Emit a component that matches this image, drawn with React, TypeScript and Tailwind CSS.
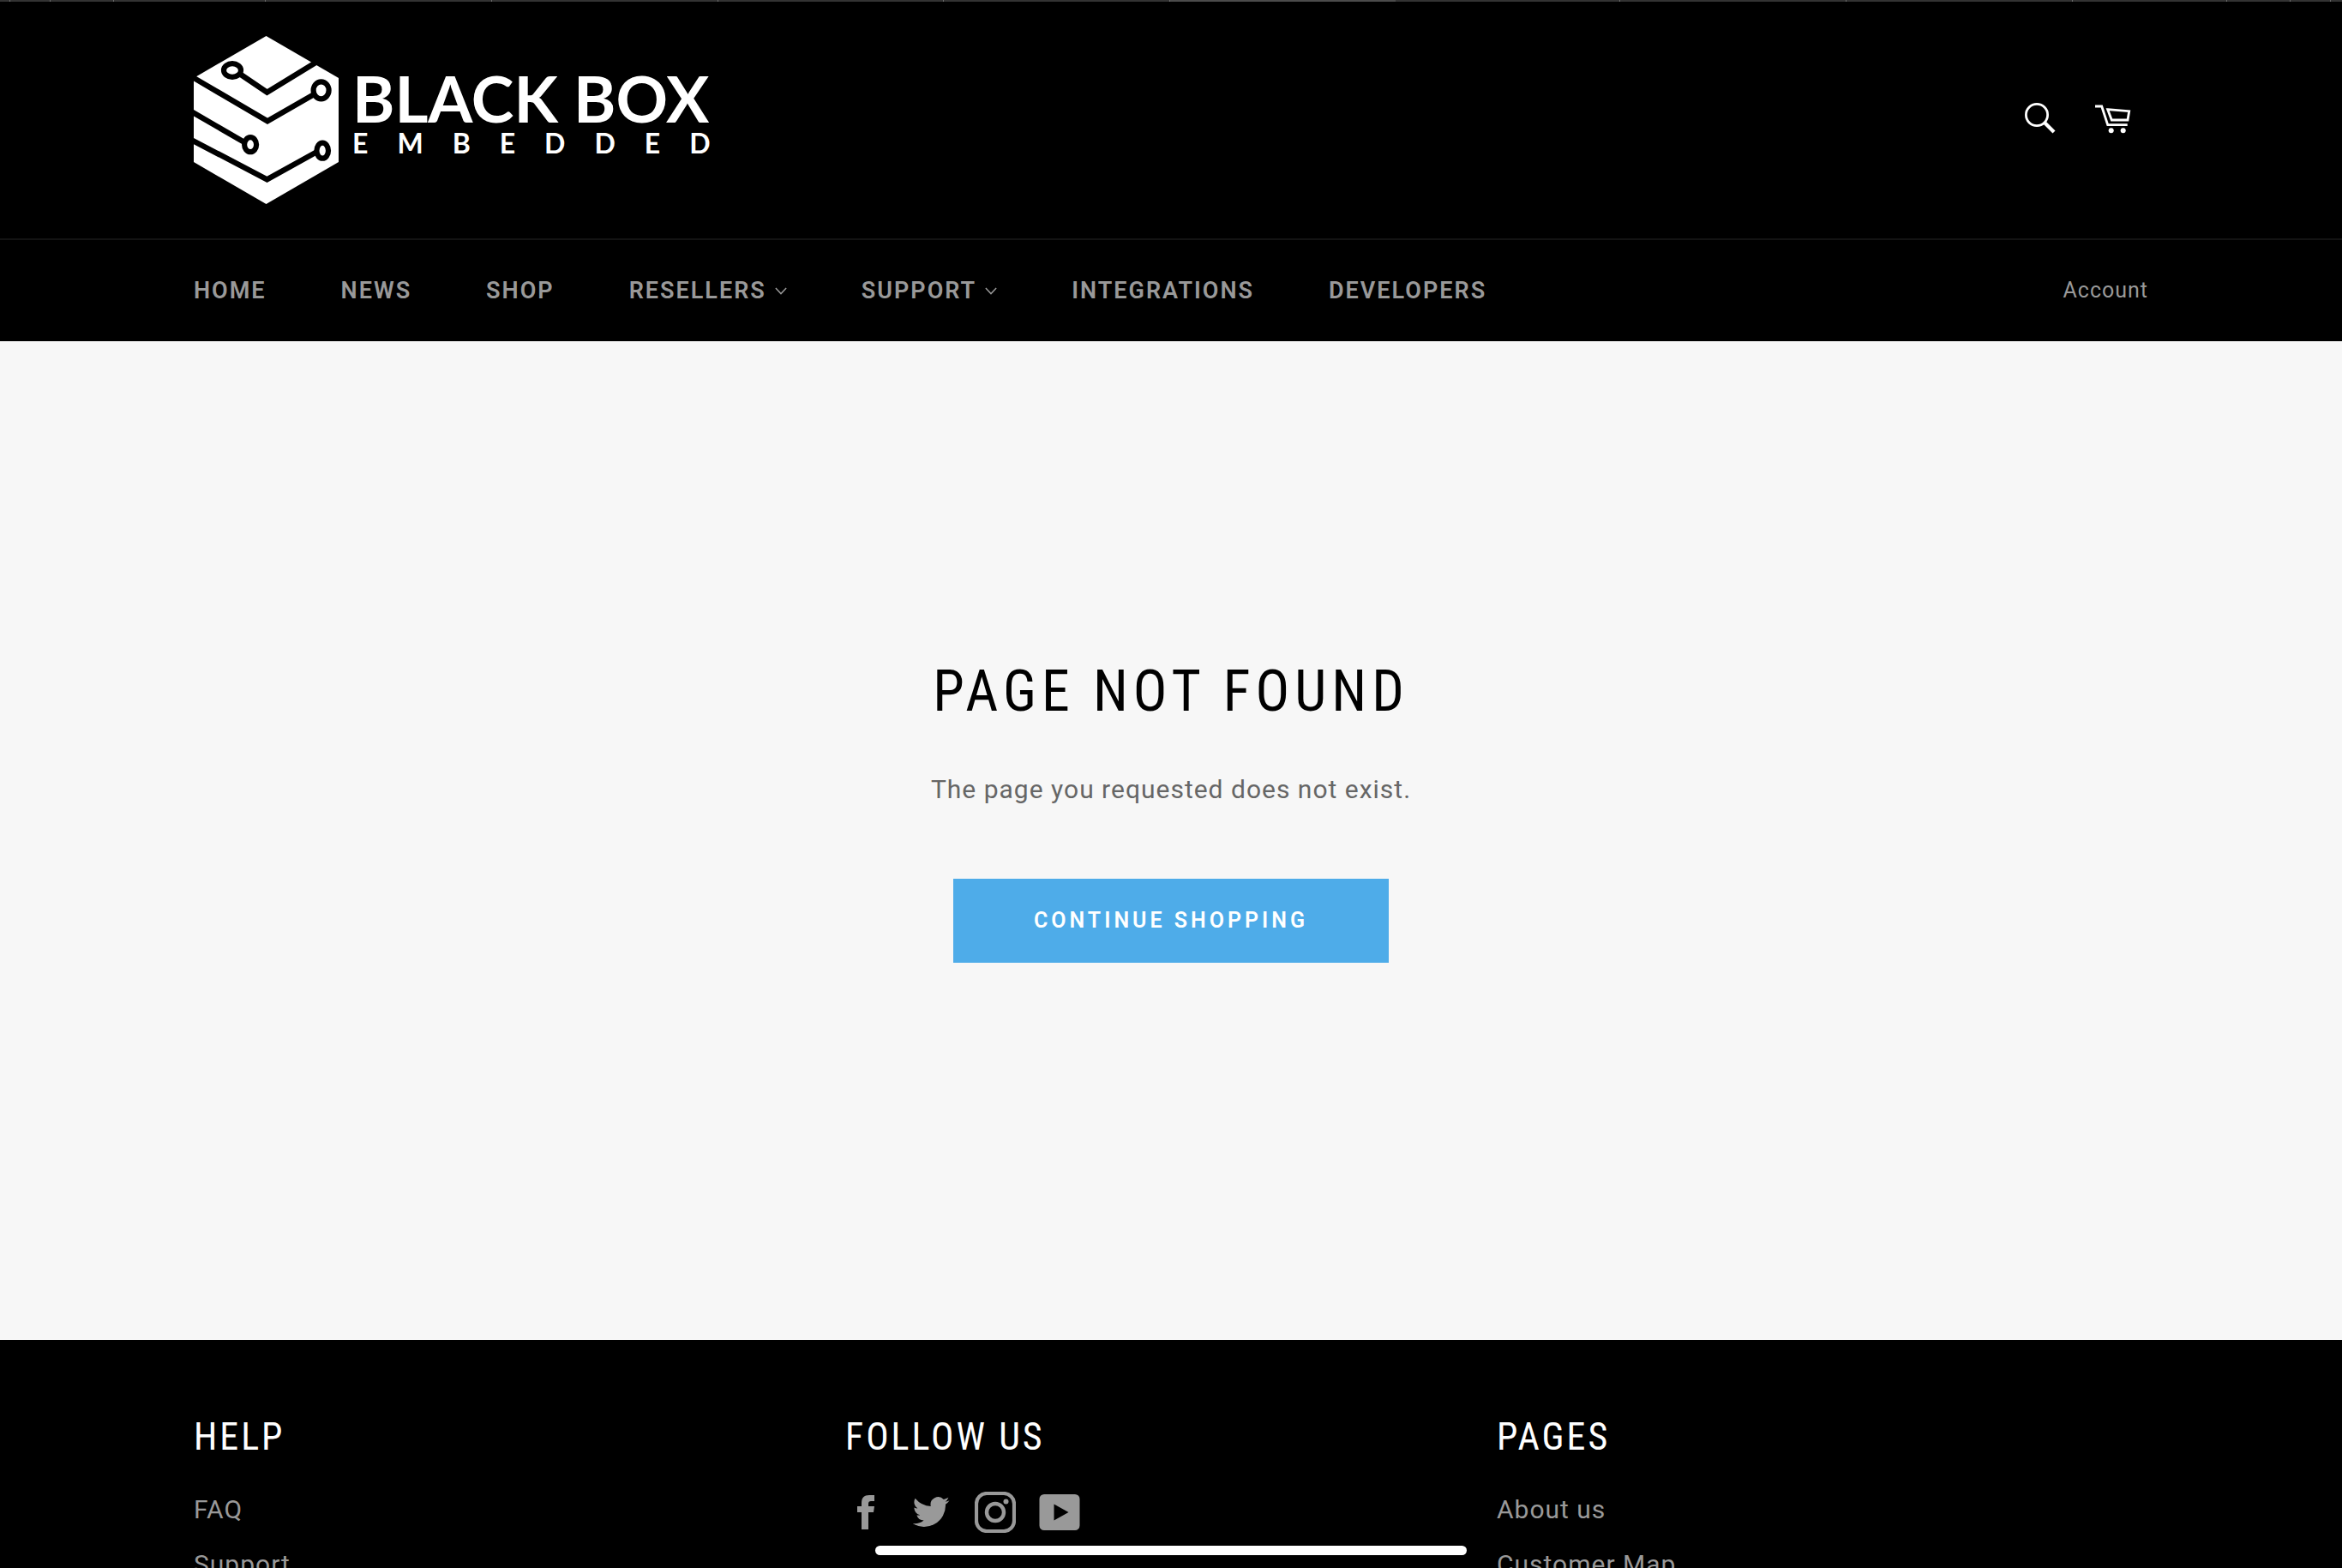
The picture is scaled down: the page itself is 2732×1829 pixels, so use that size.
import type { ReactNode } from "react";

const NAV_LINKS = [
  { label: "Home" },
  { label: "News" },
  { label: "Shop" },
  { label: "Resellers", hasMenu: true },
  { label: "Support", hasMenu: true },
  { label: "Integrations" },
  { label: "Developers" },
];

// Relative widths of the browser tabs peeking in above the page.
const TABS = [11, 46, 74, 177, 264, 264, 264, 264, 264, 263, 264, 264, 180, 74, 46, 13];
const ACTIVE_TAB = 8;

export default function App() {
  return (
    <div className="relative flex h-screen flex-col overflow-hidden bg-[#f7f7f7] font-['Roboto','Liberation_Sans',sans-serif]">
      <Header />
      <NotFound />
      <Footer />
      <div
        aria-hidden="true"
        className="absolute bottom-[15px] left-1/2 h-[11px] w-[690px] -translate-x-1/2 rounded-full bg-white"
      />
    </div>
  );
}

function Container({ children, className }: { children: ReactNode; className: string }) {
  return <div className={`mx-auto w-full max-w-[2280px] ${className}`}>{children}</div>;
}

function TabStrip() {
  return (
    <div aria-hidden="true" className="flex h-[2px] bg-[#333333]">
      {TABS.map((width, i) => (
        <div
          key={i}
          style={{ flexGrow: width }}
          className={
            i === ACTIVE_TAB
              ? "basis-0 bg-[#4b4b4b]"
              : "basis-0 border-r border-[#6a6a6a] last:border-r-0"
          }
        />
      ))}
    </div>
  );
}

function Header() {
  return (
    <header className="shrink-0 bg-black">
      <TabStrip />
      <div className="border-b-2 border-[#131313]">
        <Container className="flex h-[276px] items-center justify-between">
          <a href="#" aria-label="Black Box Embedded" className="flex items-center gap-4 text-white">
            <LogoMark />
            <span className="flex flex-col pb-5 font-['Lato',sans-serif] font-bold">
              <span className="text-[75px] leading-[74px]">BLACK BOX</span>
              <span className="text-[32px] leading-[32px] tracking-[34px]">EMBEDDED</span>
            </span>
          </a>
          <div className="flex items-center gap-[46px] pr-5 pb-1">
            <button type="button" aria-label="Search">
              <SearchIcon />
            </button>
            <a href="#" aria-label="Cart">
              <CartIcon />
            </a>
          </div>
        </Container>
      </div>
      <Container className="flex h-[118px] items-center justify-between text-[#999999]">
        <nav>
          <ul className="flex items-center gap-[87px]">
            {NAV_LINKS.map((link) => (
              <li key={link.label}>
                <a
                  href="#"
                  className="flex items-center gap-[10px] text-[27px] leading-8 font-semibold tracking-[2px] uppercase"
                >
                  {link.label}
                  {link.hasMenu && <ChevronIcon />}
                </a>
              </li>
            ))}
          </ul>
        </nav>
        <a href="#" className="text-[25px] leading-8 tracking-[1px]">
          Account
        </a>
      </Container>
    </header>
  );
}

function NotFound() {
  return (
    <main className="flex min-h-[1165px] shrink-0 flex-col items-center justify-center pb-[72px] text-center">
      <h1 className="font-['Roboto_Condensed','Roboto',sans-serif] text-[66px] leading-[80px] tracking-[6px] text-black uppercase">
        Page not found
      </h1>
      <p className="mt-[50px] text-[30px] leading-[48px] tracking-[1px] text-[#666666]">
        The page you requested does not exist.
      </p>
      <a
        href="#"
        className="mt-20 flex h-[98px] items-center bg-[#4eace9] px-[94px] text-[25px] font-semibold tracking-[4px] text-white uppercase"
      >
        Continue shopping
      </a>
    </main>
  );
}

function Footer() {
  return (
    <footer className="shrink-0 bg-black">
      <Container className="grid grid-cols-3 pt-[81px]">
        <FooterColumn title="Help">
          <FooterLinks links={["FAQ", "Support"]} />
        </FooterColumn>
        <FooterColumn title="Follow us">
          <SocialLinks />
        </FooterColumn>
        <FooterColumn title="Pages">
          <FooterLinks links={["About us", "Customer Map"]} />
        </FooterColumn>
      </Container>
    </footer>
  );
}

function FooterColumn({ title, children }: { title: string; children: ReactNode }) {
  return (
    <section>
      <h2 className="font-['Roboto_Condensed','Roboto',sans-serif] text-[44px] leading-[64px] tracking-[3px] text-white uppercase">
        {title}
      </h2>
      {children}
    </section>
  );
}

function FooterLinks({ links }: { links: string[] }) {
  return (
    <ul className="mt-[21px] text-[30px] leading-[64px] tracking-[1px] text-[#999999]">
      {links.map((link) => (
        <li key={link}>
          <a href="#">{link}</a>
        </li>
      ))}
    </ul>
  );
}

function SocialLinks() {
  return (
    <ul className="mt-8 flex items-center gap-[27px] pl-px text-[#999999]">
      <li>
        <a href="#" aria-label="Facebook">
          <svg viewBox="0 0 48 48" className="size-12" fill="currentColor">
            <path d="M18 44V24h-5v-7h5v-4c0-6 3-9 9-9h6v7h-4c-2 0-3 1-3 3v3h7l-1 7h-6v20z" />
          </svg>
        </a>
      </li>
      <li>
        <a href="#" aria-label="Twitter">
          <svg viewBox="0 0 24 24" className="size-12" fill="currentColor">
            <path d="M22.8 5.1a8.8 8.8 0 0 1-2.5.7 4.4 4.4 0 0 0 1.9-2.4 8.7 8.7 0 0 1-2.8 1.1 4.4 4.4 0 0 0-7.5 4A12.5 12.5 0 0 1 2.8 3.9a4.4 4.4 0 0 0 1.4 5.9 4.4 4.4 0 0 1-2-.6c0 2.1 1.5 4 3.5 4.4a4.4 4.4 0 0 1-2 .1 4.4 4.4 0 0 0 4.1 3A8.8 8.8 0 0 1 1.3 18.5a12.5 12.5 0 0 0 19.2-11.1 8.9 8.9 0 0 0 2.3-2.3z" />
          </svg>
        </a>
      </li>
      <li>
        <a href="#" aria-label="Instagram">
          <svg viewBox="0 0 48 48" className="size-12" fill="none" stroke="currentColor">
            <rect x="2" y="2" width="44" height="44" rx="12" strokeWidth="4.2" />
            <circle cx="24" cy="24" r="10" strokeWidth="4.4" />
            <circle cx="36.5" cy="11.5" r="3" fill="currentColor" stroke="none" />
          </svg>
        </a>
      </li>
      <li>
        <a href="#" aria-label="YouTube">
          <svg viewBox="0 0 48 48" className="size-12" fill="currentColor" fillRule="evenodd">
            <path d="M6 3h36a5.5 5.5 0 0 1 5.5 5.5v31a5.5 5.5 0 0 1-5.5 5.5H6a5.5 5.5 0 0 1-5.5-5.5v-31A5.5 5.5 0 0 1 6 3zM17.5 14.5v19L34.5 24z" />
          </svg>
        </a>
      </li>
    </ul>
  );
}

// Hexagon with circuit traces cut out of it.
function LogoMark() {
  return (
    <svg viewBox="0 0 169 196" className="h-[196px] w-[169px]" fill="none">
      <path d="M84.5 0L169 49v98l-84.5 49L0 147V49z" fill="white" />
      <g stroke="black" strokeWidth="6.4">
        <path d="M52 43l33.5 22.7L152 25" />
        <path d="M-4 46.5l90 52.8 54-31" />
        <path d="M-4 87.5L60 124.5" />
        <path d="M-4 120.5l89.5 46.8 57-31.5" />
      </g>
      <g stroke="black" fill="white" strokeWidth="6.2">
        <ellipse cx="45" cy="40" rx="10" ry="7.8" />
        <ellipse cx="148.6" cy="63.3" rx="9" ry="10" />
        <ellipse cx="66.1" cy="126.7" rx="7" ry="8.5" />
        <ellipse cx="150.2" cy="133.7" rx="6.8" ry="9" />
      </g>
    </svg>
  );
}

function SearchIcon() {
  return (
    <svg viewBox="0 0 36 36" className="size-9" fill="none" stroke="white">
      <circle cx="14" cy="14" r="12.6" strokeWidth="2.8" />
      <path d="M22.5 22.5L34 34" strokeWidth="4.2" />
    </svg>
  );
}

function CartIcon() {
  return (
    <svg viewBox="0 0 42 36" className="h-9 w-[42px]" fill="none" stroke="white" strokeWidth="2.8">
      <path d="M0 4h7.7l7 21.7h23" />
      <path d="M14.7 7.7l25 2-1.7 10.3H19.3z" />
      <g fill="white" stroke="none">
        <circle cx="18.7" cy="32.3" r="3" />
        <circle cx="32.7" cy="32.3" r="3" />
      </g>
    </svg>
  );
}

function ChevronIcon() {
  return (
    <svg viewBox="0 0 16 10" className="h-[9px] w-[14px]" fill="none" stroke="currentColor" strokeWidth="1.7">
      <path d="M1 1l7 7.5L15 1" />
    </svg>
  );
}
